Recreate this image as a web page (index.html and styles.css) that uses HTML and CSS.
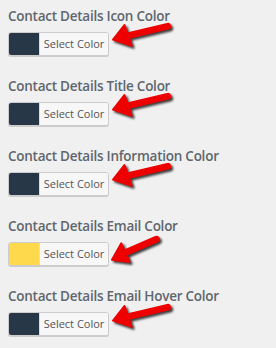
FILE: index.html
```html
<!DOCTYPE html>
<html lang="en">
<head>
    <meta charset="UTF-8">
    <title>Contact Details Colors</title>
    <link rel="stylesheet" href="styles.css">
</head>
<body>
    <div class="color-list">
        <div class="color-field">
            <h3 class="field-title">Contact Details Icon Color</h3>
            <div class="picker-row">
                <button class="color-btn"><span class="swatch navy"></span><span class="btn-label">Select Color</span></button>
                <svg class="arrow" viewBox="0 0 60 28"><path d="M17 13 L55 4" /><polygon points="2,17 13,3 20,23" /></svg>
            </div>
        </div>

        <div class="color-field">
            <h3 class="field-title">Contact Details Title Color</h3>
            <div class="picker-row">
                <button class="color-btn"><span class="swatch navy"></span><span class="btn-label">Select Color</span></button>
                <svg class="arrow" viewBox="0 0 60 28"><path d="M17 13 L55 4" /><polygon points="2,17 13,3 20,23" /></svg>
            </div>
        </div>

        <div class="color-field">
            <h3 class="field-title">Contact Details Information Color</h3>
            <div class="picker-row">
                <button class="color-btn"><span class="swatch navy"></span><span class="btn-label">Select Color</span></button>
                <svg class="arrow" viewBox="0 0 60 28"><path d="M17 13 L55 4" /><polygon points="2,17 13,3 20,23" /></svg>
            </div>
        </div>

        <div class="color-field">
            <h3 class="field-title">Contact Details Email Color</h3>
            <div class="picker-row">
                <button class="color-btn"><span class="swatch yellow"></span><span class="btn-label">Select Color</span></button>
                <svg class="arrow steep" viewBox="0 0 60 28"><path d="M14 17 L44 4" /><polygon points="1,24 10,8 18,26" /></svg>
            </div>
        </div>

        <div class="color-field">
            <h3 class="field-title">Contact Details Email Hover Color</h3>
            <div class="picker-row">
                <button class="color-btn"><span class="swatch navy"></span><span class="btn-label">Select Color</span></button>
                <svg class="arrow" viewBox="0 0 60 28"><path d="M17 14 L55 5" /><polygon points="2,18 13,4 20,24" /></svg>
            </div>
        </div>
    </div>
</body>
</html>
```

FILE: styles.css
```css
body {
    margin: 0;
    padding: 6px 8px;
    background: #f0f0f0;
    font-family: 'Open Sans', 'Noto Sans', sans-serif;
}

.color-field {
    height: 70px;
}

.field-title {
    margin: 0;
    font-size: 13.5px;
    line-height: 20px;
    font-weight: 600;
    letter-spacing: -0.25px;
    color: #5f666d;
}

.picker-row {
    position: relative;
    margin-top: 6px;
    height: 24px;
}

.color-btn {
    display: flex;
    align-items: stretch;
    height: 24px;
    width: 101px;
    padding: 0;
    border: 1px solid #cccccc;
    border-radius: 3px;
    background: #f7f7f7;
    box-shadow: 0 1px 0 #cccccc;
    overflow: hidden;
    font-family: inherit;
}

.swatch {
    width: 30px;
}

.swatch.navy {
    background: #283747;
}

.swatch.yellow {
    background: #fdd94b;
}

.btn-label {
    flex: 1;
    align-self: center;
    font-size: 11px;
    color: #555555;
    text-align: center;
    border-left: 1px solid #dddddd;
    line-height: 22px;
    background: #f7f7f7;
}

/* red arrows drawn over the screenshot */
.arrow {
    position: absolute;
    left: 103px;
    top: -10px;
    width: 62px;
    height: 29px;
    filter: drop-shadow(2px 2px 1px rgba(0, 0, 0, 0.75));
}

.arrow path {
    stroke: #ee0000;
    stroke-width: 6.5;
    stroke-linecap: round;
    fill: none;
}

.arrow polygon {
    fill: #ee0000;
    stroke: #ee0000;
    stroke-width: 2;
    stroke-linejoin: round;
}

.arrow.steep {
    top: -7px;
}
```
